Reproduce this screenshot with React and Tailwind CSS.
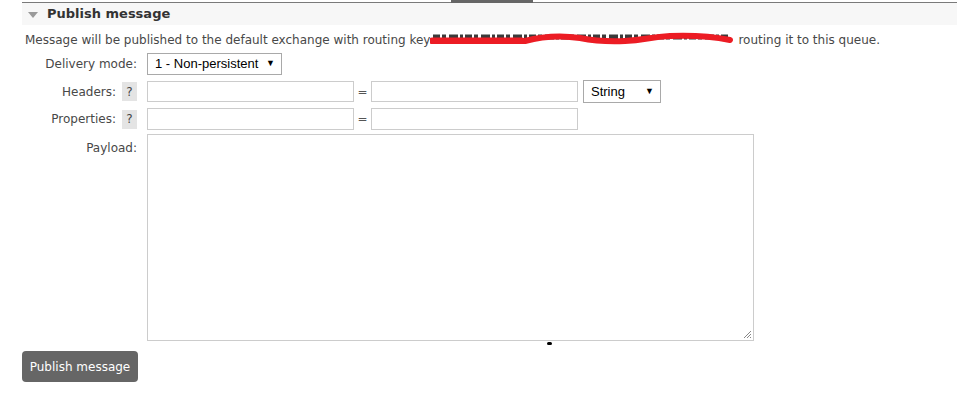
import React from 'react';

const font = { fontFamily: '"DejaVu Sans", Verdana, sans-serif' };

const HelpBox = () => (
  <span className="ml-[6px] inline-flex h-[19px] w-[15px] items-center justify-center bg-[#e4e4e4] text-[12px] text-[#444]">
    ?
  </span>
);

const FakeSelect = ({ label, className }) => (
  <div
    className={`flex items-center justify-between border border-[#a9a9a9] bg-white pl-[7px] pr-[6px] text-[13px] text-black ${className}`}
    style={{ fontFamily: '"Liberation Sans", Arial, sans-serif' }}
  >
    <span>{label}</span>
    <span className="text-[9px]">▼</span>
  </div>
);

const Row = ({ label, help, className = '', top = false, children }) => (
  <div className={`flex ${top ? 'items-start' : 'items-center'} ${className}`}>
    <div className={`flex w-[117px] shrink-0 items-center justify-end pr-[2px] ${top ? 'pt-[5px]' : ''}`}>
      <span>{label}</span>
      {help && <HelpBox />}
    </div>
    <div className="ml-[8px] flex items-center">{children}</div>
  </div>
);

export default function App() {
  return (
    <div className="h-[396px] w-[957px] bg-white text-[12px] text-[#484848]" style={font}>
      {/* Top rule with active tab marker */}
      <div className="ml-[22px] flex h-[3px] items-end">
        <div className="h-px w-[429px] bg-[#7a7a7a]" />
        <div className="h-[3px] w-[82px] bg-[#666]" />
        <div className="h-px flex-1 bg-[#7a7a7a]" />
      </div>

      {/* Section header */}
      <div className="ml-[22px] flex h-[22px] items-center bg-[#f7f7f7]">
        <svg width="10" height="6" viewBox="0 0 10 6" className="ml-[6px] mt-[1px]">
          <polygon points="0,0 10,0 5,6" fill="#9a9a9a" />
        </svg>
        <span className="ml-[9px] text-[13px] font-bold text-[#333]">Publish message</span>
      </div>

      <div className="ml-[22px]">
        {/* Description (routing key scribbled out) */}
        <div className="mt-[5px] flex h-[20px] items-center pl-[3px]">
          <span>Message will be published to the default exchange with routing key</span>
          <svg width="304" height="16" viewBox="0 0 304 16" className="shrink-0">
            <path d="M3 5 L300 5" stroke="#3a3a3a" strokeWidth="5" strokeDasharray="7 2 4 3 9 2 3 2" />
            <path
              d="M2 9 C40 9 70 9 95 9 C110 5 130 3 150 6 C165 9 175 10 195 9 C215 8 220 5 240 4 C265 3 285 5 300 8"
              stroke="#ec1c24"
              strokeWidth="6"
              fill="none"
              strokeLinecap="round"
            />
            <path d="M2 8 L92 8" stroke="#ec1c24" strokeWidth="5" strokeLinecap="round" />
          </svg>
          <span className="ml-[4px]">routing it to this queue.</span>
        </div>

        {/* Delivery mode */}
        <Row label="Delivery mode:" className="mt-[3px] h-[22px]">
          <FakeSelect label="1 - Non-persistent" className="h-[22px] w-[135px]" />
        </Row>

        {/* Headers */}
        <Row label="Headers:" help className="mt-[5px] h-[23px]">
          <div className="h-[21px] w-[207px] border border-[#ccc]" />
          <span className="w-[17px] text-center text-[#555]">=</span>
          <div className="h-[21px] w-[207px] border border-[#ccc]" />
          <FakeSelect label="String" className="ml-[5px] h-[23px] w-[78px]" />
        </Row>

        {/* Properties */}
        <Row label="Properties:" help className="mt-[5px] h-[22px]">
          <div className="h-[22px] w-[207px] border border-[#ccc]" />
          <span className="w-[17px] text-center text-[#555]">=</span>
          <div className="h-[22px] w-[207px] border border-[#ccc]" />
        </Row>

        {/* Payload */}
        <Row label="Payload:" top className="mt-[4px]">
          <div className="relative h-[207px] w-[607px] border border-[#ccc]">
            <svg width="9" height="9" viewBox="0 0 9 9" className="absolute bottom-[1px] right-[1px]">
              <path d="M8 1 L1 8 M8 4 L4 8 M8 7 L7 8" stroke="#888" strokeWidth="1" />
            </svg>
          </div>
        </Row>

        <div className="relative">
          <span className="absolute left-[525px] top-[1px] h-[3px] w-[5px] rounded-full bg-black" />
          <button className="mt-[10px] h-[31px] w-[116px] rounded-[4px] bg-[#666] text-[12px] text-white">
            Publish message
          </button>
        </div>
      </div>
    </div>
  );
}
